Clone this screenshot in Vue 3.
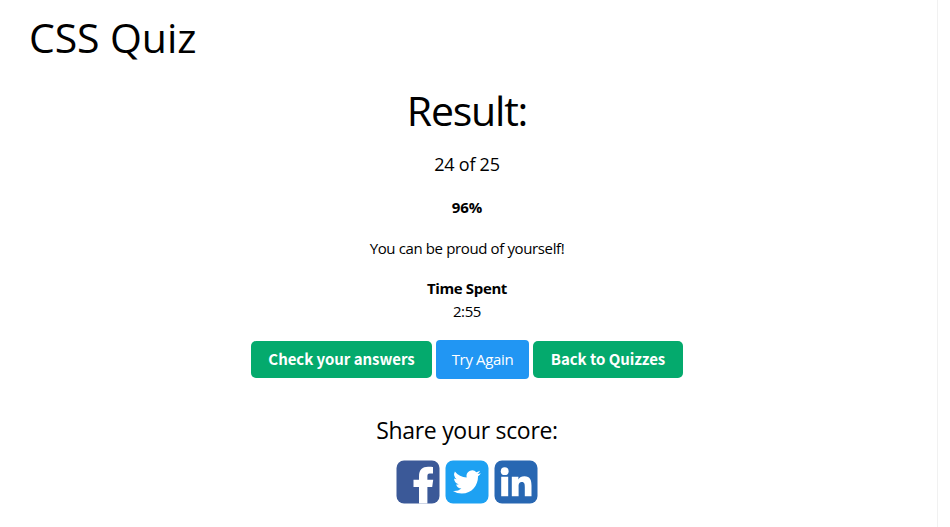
<script setup>
const result = { score: 24, total: 25, percent: 96, time: '2:55' }
</script>

<template>
  <main class="page">
    <h1 class="title"><span>CSS Quiz</span></h1>
    <section class="result">
      <h2 class="heading">Result:</h2>
      <p class="score">{{ result.score }} of {{ result.total }}</p>
      <p class="percent">{{ result.percent }}%</p>
      <p class="message">You can be proud of yourself!</p>
      <p class="time-label">Time Spent</p>
      <p class="time">{{ result.time }}</p>
      <div class="actions">
        <button class="btn green check">Check your answers</button>
        <button class="btn blue">Try Again</button>
        <button class="btn green back">Back to Quizzes</button>
      </div>
      <h3 class="share">Share your score:</h3>
      <div class="social">
        <a aria-label="Facebook">
          <svg viewBox="0 0 44 44">
            <rect x=".5" y=".5" width="43" height="43" rx="7.5" fill="#3b5998" />
            <path fill="#fff" d="M23 43.5V27H17.5V19.7H23V16.2C23 9.8 26.6 6.8 32 6.8C34.5 6.8 36.3 7 37 7.1V13.6H33.6C31.8 13.6 31.4 14.8 31.4 16.5V19.7H37.2L36.2 27H31.4V43.5Z" />
          </svg>
        </a>
        <a aria-label="Twitter">
          <svg viewBox="0 0 44 44">
            <rect x=".5" y=".5" width="43" height="43" rx="7.5" fill="#1da1f2" />
            <path fill="#fff" transform="translate(8 7.7) scale(1.16 1.19)" d="M23.95 4.57a10 10 0 0 1-2.82.77 4.96 4.96 0 0 0 2.16-2.72c-.95.55-2 .95-3.13 1.18a4.92 4.92 0 0 0-8.38 4.48C7.69 8.1 4.07 6.13 1.64 3.16a4.92 4.92 0 0 0 1.52 6.57 4.9 4.9 0 0 1-2.23-.61v.06c0 2.38 1.7 4.37 3.95 4.82a5 5 0 0 1-2.21.09 4.94 4.94 0 0 0 4.6 3.42A9.87 9.87 0 0 1 0 19.54a13.99 13.99 0 0 0 7.55 2.21c9.05 0 14-7.5 14-13.98 0-.21 0-.42-.02-.63a9.94 9.94 0 0 0 2.46-2.55z" />
          </svg>
        </a>
        <a aria-label="LinkedIn">
          <svg viewBox="0 0 44 44">
            <rect x=".5" y=".5" width="43" height="43" rx="7.5" fill="#2867b2" />
            <circle cx="10.7" cy="11.2" r="3.9" fill="#fff" />
            <path fill="#fff" d="M7.2 16.8H14.2V36.3H7.2ZM17.8 16.8H24.4V19.4C25.5 17.5 27.6 16.3 30.4 16.3C36.3 16.3 37.5 20.4 37.5 25.6V36.3H30.8V27C30.8 24.6 30.6 22.1 27.9 22.1C25 22.1 24.6 24.3 24.6 26.8V36.3H17.8Z" />
          </svg>
        </a>
      </div>
    </section>
  </main>
</template>

<style>
body {
  background: #fff;
}
</style>

<style scoped>
.page {
  box-sizing: border-box;
  width: 938px;
  height: 527px;
  padding: 13px 3px 0 0;
  border-right: 1px solid #f1f1f1;
  overflow: hidden;
  color: #000;
  font-family: "Open Sans", "Noto Sans", sans-serif;
  font-size: 15px;
  letter-spacing: -0.37px;
}
h1, h2, h3, p {
  margin: 0;
  font-weight: 400;
  white-space: nowrap;
}
.title {
  padding-left: 29px;
  font-size: 41px;
  letter-spacing: -0.1px;
  line-height: 48px;
}
.result {
  display: flex;
  flex-direction: column;
  align-items: center;
}
.heading {
  margin-top: 25px;
  font-size: 41px;
  letter-spacing: -1.2px;
  line-height: 48px;
}
.score {
  margin-top: 17px;
  font-size: 18px;
  letter-spacing: -0.25px;
  line-height: 27px;
}
.percent {
  margin-top: 18px;
  font-weight: 700;
  letter-spacing: 0;
  line-height: 23px;
}
.message {
  margin-top: 18px;
  line-height: 23px;
}
.time-label {
  margin-top: 17px;
  font-weight: 700;
  line-height: 23px;
}
.time {
  line-height: 23px;
}
.actions {
  display: flex;
  align-items: center;
  gap: 4px;
  margin-top: 17px;
}
.btn {
  padding: 0;
  border: 0;
  border-radius: 5px;
  color: #fff;
  white-space: nowrap;
}
.green {
  height: 37px;
  padding-bottom: 2px;
  background: #04aa6d;
  font: 700 15px/35px "Noto Sans CJK SC", sans-serif;
  letter-spacing: -0.05px;
}
.check {
  width: 181px;
}
.blue {
  width: 93px;
  height: 39px;
  border-radius: 4px;
  background: #2196f3;
  font: 400 15px/39px "Open Sans", sans-serif;
  letter-spacing: -0.35px;
}
.back {
  width: 150px;
}
.share {
  margin-top: 33px;
  font-size: 23px;
  letter-spacing: -0.3px;
  line-height: 36px;
}
.social {
  display: flex;
  gap: 5px;
  margin-top: 12px;
}
.social svg {
  display: block;
  width: 44px;
  height: 44px;
}
</style>
